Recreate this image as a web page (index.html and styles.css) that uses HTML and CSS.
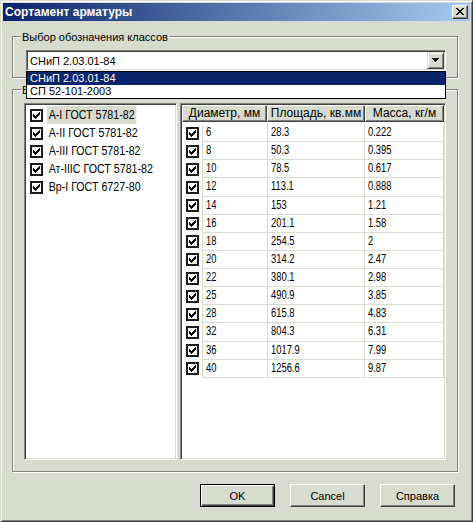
FILE: index.html
```html
<!DOCTYPE html>
<html lang="ru">
<head>
<meta charset="utf-8">
<title>Сортамент арматуры</title>
<link rel="stylesheet" href="styles.css">
</head>
<body>
<div class="window">
  <div class="titlebar">
    <span class="title">Сортамент арматуры</span>
    <span class="close"><svg width="8" height="7" viewBox="0 0 8 7" shape-rendering="crispEdges"><path d="M0 0h2v1h-2zM6 0h2v1h-2zM1 1h2v1h-2zM5 1h2v1h-2zM2 2h4v1h-4zM3 3h2v1h-2zM2 4h4v1h-4zM1 5h2v1h-2zM5 5h2v1h-2zM0 6h2v1h-2zM6 6h2v1h-2z"/></svg></span>
  </div>
  <div class="client">
    <div class="group g1">
      <span class="glabel">Выбор обозначения классов</span>
      <div class="combo sunken">
        <span class="combo-text">СНиП 2.03.01-84</span>
        <span class="combo-btn"><svg width="7" height="4" viewBox="0 0 7 4" shape-rendering="crispEdges"><path d="M0 0h7v1h-1v1h-1v1h-1v1h-1v-1h-1v-1h-1v-1h-1z"/></svg></span>
      </div>
      <ul class="droplist">
        <li class="sel">СНиП 2.03.01-84</li>
        <li>СП 52-101-2003</li>
      </ul>
    </div>
    <div class="group g2">
      <span class="glabel">Выбор классов</span>
      <div class="panes">
        <ul class="classlist sunken">
          <li><span class="cb"><svg width="9" height="9" viewBox="0 0 9 9" shape-rendering="crispEdges"><path d="M7 1h1v1h-1zM6 2h2v1h-2zM1 3h1v1h-1zM5 3h3v1h-3zM1 4h2v1h-2zM4 4h3v1h-3zM1 5h5v1h-5zM2 6h3v1h-3zM3 7h1v1h-1z"/></svg></span><span class="itxt sel">А-I ГОСТ 5781-82</span></li>
          <li><span class="cb"><svg width="9" height="9" viewBox="0 0 9 9" shape-rendering="crispEdges"><path d="M7 1h1v1h-1zM6 2h2v1h-2zM1 3h1v1h-1zM5 3h3v1h-3zM1 4h2v1h-2zM4 4h3v1h-3zM1 5h5v1h-5zM2 6h3v1h-3zM3 7h1v1h-1z"/></svg></span><span class="itxt">А-II ГОСТ 5781-82</span></li>
          <li><span class="cb"><svg width="9" height="9" viewBox="0 0 9 9" shape-rendering="crispEdges"><path d="M7 1h1v1h-1zM6 2h2v1h-2zM1 3h1v1h-1zM5 3h3v1h-3zM1 4h2v1h-2zM4 4h3v1h-3zM1 5h5v1h-5zM2 6h3v1h-3zM3 7h1v1h-1z"/></svg></span><span class="itxt">А-III ГОСТ 5781-82</span></li>
          <li><span class="cb"><svg width="9" height="9" viewBox="0 0 9 9" shape-rendering="crispEdges"><path d="M7 1h1v1h-1zM6 2h2v1h-2zM1 3h1v1h-1zM5 3h3v1h-3zM1 4h2v1h-2zM4 4h3v1h-3zM1 5h5v1h-5zM2 6h3v1h-3zM3 7h1v1h-1z"/></svg></span><span class="itxt">Ат-IIIС ГОСТ 5781-82</span></li>
          <li><span class="cb"><svg width="9" height="9" viewBox="0 0 9 9" shape-rendering="crispEdges"><path d="M7 1h1v1h-1zM6 2h2v1h-2zM1 3h1v1h-1zM5 3h3v1h-3zM1 4h2v1h-2zM4 4h3v1h-3zM1 5h5v1h-5zM2 6h3v1h-3zM3 7h1v1h-1z"/></svg></span><span class="itxt">Вр-I ГОСТ 6727-80</span></li>
        </ul>
        <div class="grid sunken">
          <div class="ghead">
            <span class="h h1">Диаметр, мм</span>
            <span class="h h2">Площадь, кв.мм</span>
            <span class="h h3">Масса, кг/м</span>
          </div>
          <div class="gbody">
            <div class="row"><span class="c0"><span class="cb"><svg width="9" height="9" viewBox="0 0 9 9" shape-rendering="crispEdges"><path d="M7 1h1v1h-1zM6 2h2v1h-2zM1 3h1v1h-1zM5 3h3v1h-3zM1 4h2v1h-2zM4 4h3v1h-3zM1 5h5v1h-5zM2 6h3v1h-3zM3 7h1v1h-1z"/></svg></span></span><span class="c c1"><span class="t">6</span></span><span class="c c2"><span class="t">28.3</span></span><span class="c c3"><span class="t">0.222</span></span></div>
            <div class="row"><span class="c0"><span class="cb"><svg width="9" height="9" viewBox="0 0 9 9" shape-rendering="crispEdges"><path d="M7 1h1v1h-1zM6 2h2v1h-2zM1 3h1v1h-1zM5 3h3v1h-3zM1 4h2v1h-2zM4 4h3v1h-3zM1 5h5v1h-5zM2 6h3v1h-3zM3 7h1v1h-1z"/></svg></span></span><span class="c c1"><span class="t">8</span></span><span class="c c2"><span class="t">50.3</span></span><span class="c c3"><span class="t">0.395</span></span></div>
            <div class="row"><span class="c0"><span class="cb"><svg width="9" height="9" viewBox="0 0 9 9" shape-rendering="crispEdges"><path d="M7 1h1v1h-1zM6 2h2v1h-2zM1 3h1v1h-1zM5 3h3v1h-3zM1 4h2v1h-2zM4 4h3v1h-3zM1 5h5v1h-5zM2 6h3v1h-3zM3 7h1v1h-1z"/></svg></span></span><span class="c c1"><span class="t">10</span></span><span class="c c2"><span class="t">78.5</span></span><span class="c c3"><span class="t">0.617</span></span></div>
            <div class="row"><span class="c0"><span class="cb"><svg width="9" height="9" viewBox="0 0 9 9" shape-rendering="crispEdges"><path d="M7 1h1v1h-1zM6 2h2v1h-2zM1 3h1v1h-1zM5 3h3v1h-3zM1 4h2v1h-2zM4 4h3v1h-3zM1 5h5v1h-5zM2 6h3v1h-3zM3 7h1v1h-1z"/></svg></span></span><span class="c c1"><span class="t">12</span></span><span class="c c2"><span class="t">113.1</span></span><span class="c c3"><span class="t">0.888</span></span></div>
            <div class="row"><span class="c0"><span class="cb"><svg width="9" height="9" viewBox="0 0 9 9" shape-rendering="crispEdges"><path d="M7 1h1v1h-1zM6 2h2v1h-2zM1 3h1v1h-1zM5 3h3v1h-3zM1 4h2v1h-2zM4 4h3v1h-3zM1 5h5v1h-5zM2 6h3v1h-3zM3 7h1v1h-1z"/></svg></span></span><span class="c c1"><span class="t">14</span></span><span class="c c2"><span class="t">153</span></span><span class="c c3"><span class="t">1.21</span></span></div>
            <div class="row"><span class="c0"><span class="cb"><svg width="9" height="9" viewBox="0 0 9 9" shape-rendering="crispEdges"><path d="M7 1h1v1h-1zM6 2h2v1h-2zM1 3h1v1h-1zM5 3h3v1h-3zM1 4h2v1h-2zM4 4h3v1h-3zM1 5h5v1h-5zM2 6h3v1h-3zM3 7h1v1h-1z"/></svg></span></span><span class="c c1"><span class="t">16</span></span><span class="c c2"><span class="t">201.1</span></span><span class="c c3"><span class="t">1.58</span></span></div>
            <div class="row"><span class="c0"><span class="cb"><svg width="9" height="9" viewBox="0 0 9 9" shape-rendering="crispEdges"><path d="M7 1h1v1h-1zM6 2h2v1h-2zM1 3h1v1h-1zM5 3h3v1h-3zM1 4h2v1h-2zM4 4h3v1h-3zM1 5h5v1h-5zM2 6h3v1h-3zM3 7h1v1h-1z"/></svg></span></span><span class="c c1"><span class="t">18</span></span><span class="c c2"><span class="t">254.5</span></span><span class="c c3"><span class="t">2</span></span></div>
            <div class="row"><span class="c0"><span class="cb"><svg width="9" height="9" viewBox="0 0 9 9" shape-rendering="crispEdges"><path d="M7 1h1v1h-1zM6 2h2v1h-2zM1 3h1v1h-1zM5 3h3v1h-3zM1 4h2v1h-2zM4 4h3v1h-3zM1 5h5v1h-5zM2 6h3v1h-3zM3 7h1v1h-1z"/></svg></span></span><span class="c c1"><span class="t">20</span></span><span class="c c2"><span class="t">314.2</span></span><span class="c c3"><span class="t">2.47</span></span></div>
            <div class="row"><span class="c0"><span class="cb"><svg width="9" height="9" viewBox="0 0 9 9" shape-rendering="crispEdges"><path d="M7 1h1v1h-1zM6 2h2v1h-2zM1 3h1v1h-1zM5 3h3v1h-3zM1 4h2v1h-2zM4 4h3v1h-3zM1 5h5v1h-5zM2 6h3v1h-3zM3 7h1v1h-1z"/></svg></span></span><span class="c c1"><span class="t">22</span></span><span class="c c2"><span class="t">380.1</span></span><span class="c c3"><span class="t">2.98</span></span></div>
            <div class="row"><span class="c0"><span class="cb"><svg width="9" height="9" viewBox="0 0 9 9" shape-rendering="crispEdges"><path d="M7 1h1v1h-1zM6 2h2v1h-2zM1 3h1v1h-1zM5 3h3v1h-3zM1 4h2v1h-2zM4 4h3v1h-3zM1 5h5v1h-5zM2 6h3v1h-3zM3 7h1v1h-1z"/></svg></span></span><span class="c c1"><span class="t">25</span></span><span class="c c2"><span class="t">490.9</span></span><span class="c c3"><span class="t">3.85</span></span></div>
            <div class="row"><span class="c0"><span class="cb"><svg width="9" height="9" viewBox="0 0 9 9" shape-rendering="crispEdges"><path d="M7 1h1v1h-1zM6 2h2v1h-2zM1 3h1v1h-1zM5 3h3v1h-3zM1 4h2v1h-2zM4 4h3v1h-3zM1 5h5v1h-5zM2 6h3v1h-3zM3 7h1v1h-1z"/></svg></span></span><span class="c c1"><span class="t">28</span></span><span class="c c2"><span class="t">615.8</span></span><span class="c c3"><span class="t">4.83</span></span></div>
            <div class="row"><span class="c0"><span class="cb"><svg width="9" height="9" viewBox="0 0 9 9" shape-rendering="crispEdges"><path d="M7 1h1v1h-1zM6 2h2v1h-2zM1 3h1v1h-1zM5 3h3v1h-3zM1 4h2v1h-2zM4 4h3v1h-3zM1 5h5v1h-5zM2 6h3v1h-3zM3 7h1v1h-1z"/></svg></span></span><span class="c c1"><span class="t">32</span></span><span class="c c2"><span class="t">804.3</span></span><span class="c c3"><span class="t">6.31</span></span></div>
            <div class="row"><span class="c0"><span class="cb"><svg width="9" height="9" viewBox="0 0 9 9" shape-rendering="crispEdges"><path d="M7 1h1v1h-1zM6 2h2v1h-2zM1 3h1v1h-1zM5 3h3v1h-3zM1 4h2v1h-2zM4 4h3v1h-3zM1 5h5v1h-5zM2 6h3v1h-3zM3 7h1v1h-1z"/></svg></span></span><span class="c c1"><span class="t">36</span></span><span class="c c2"><span class="t">1017.9</span></span><span class="c c3"><span class="t">7.99</span></span></div>
            <div class="row"><span class="c0"><span class="cb"><svg width="9" height="9" viewBox="0 0 9 9" shape-rendering="crispEdges"><path d="M7 1h1v1h-1zM6 2h2v1h-2zM1 3h1v1h-1zM5 3h3v1h-3zM1 4h2v1h-2zM4 4h3v1h-3zM1 5h5v1h-5zM2 6h3v1h-3zM3 7h1v1h-1z"/></svg></span></span><span class="c c1"><span class="t">40</span></span><span class="c c2"><span class="t">1256.6</span></span><span class="c c3"><span class="t">9.87</span></span></div>
          </div>
        </div>
      </div>
    </div>
    <div class="buttons">
      <button class="btn default">OK</button>
      <button class="btn">Cancel</button>
      <button class="btn">Справка</button>
    </div>
  </div>
</div>
</body>
</html>
```

FILE: styles.css
```css
* { box-sizing: border-box; }
html, body { margin: 0; padding: 0; }
body {
  width: 473px;
  height: 522px;
  overflow: hidden;
  background: #d7dbd0;
  color: #000;
  font-family: "Liberation Sans", Arial, sans-serif;
}
.window {
  width: 473px;
  height: 522px;
  border: 1px solid;
  border-color: #d7dbd0 #404040 #404040 #d7dbd0;
  box-shadow: inset 1px 1px #fff, inset -1px -1px #808080;
  padding: 2px;
  display: flex;
  flex-direction: column;
}
.titlebar {
  flex: none;
  height: 18px;
  display: flex;
  align-items: center;
  justify-content: space-between;
  padding: 0 2px;
  background: linear-gradient(90deg, #0a246a, #a6caf0);
}
.title {
  color: #fff;
  font-weight: bold;
  font-size: 12px;
  line-height: 18px;
  white-space: nowrap;
}
.close {
  width: 16px;
  height: 14px;
  display: flex;
  padding: 2px 0 0 3px;
  background: #d7dbd0;
  border: 1px solid;
  border-color: #fff #404040 #404040 #fff;
  box-shadow: inset -1px -1px #808080;
}
.close svg, .combo-btn svg, .cb svg { display: block; }
.client {
  flex: 1;
  display: flex;
  flex-direction: column;
}
.group {
  position: relative;
  flex: none;
  margin-left: 9px;
  width: 446px;
  border: 1px solid #808080;
  box-shadow: inset 1px 1px #fff, 1px 1px #fff;
}
.g1 {
  z-index: 2;
  margin-top: 15px;
  height: 42px;
  padding: 13px 0 0 13px;
}
.g2 {
  z-index: 1;
  margin-top: 11px;
  height: 383px;
  padding: 13px 0 0 11px;
}
.glabel {
  position: absolute;
  left: 8px;
  top: -7px;
  padding: 0 1px;
  background: #d7dbd0;
  font-size: 11px;
  line-height: 14px;
  white-space: nowrap;
}
.sunken {
  background: #fff;
  border: 1px solid;
  border-color: #808080 #fff #fff #808080;
  box-shadow: inset 1px 1px #404040, inset -1px -1px #d7dbd0;
}
.combo {
  width: 420px;
  height: 21px;
  display: flex;
  align-items: center;
  padding: 1px;
}
.combo-text {
  flex: 1;
  padding-left: 2px;
  font-size: 11px;
  white-space: nowrap;
}
.combo-btn {
  width: 17px;
  height: 17px;
  display: flex;
  align-items: center;
  justify-content: center;
  padding-bottom: 1px;
  background: #d7dbd0;
  border: 1px solid;
  border-color: #d7dbd0 #404040 #404040 #d7dbd0;
  box-shadow: inset 1px 1px #fff, inset -1px -1px #808080;
}
.droplist {
  position: absolute;
  left: 13px;
  top: 34px;
  width: 420px;
  margin: 0;
  padding: 0;
  list-style: none;
  background: #fff;
  border: 1px solid #000;
  z-index: 3;
}
.droplist li {
  height: 13px;
  line-height: 13px;
  font-size: 11px;
  padding-left: 3px;
  white-space: nowrap;
}
.droplist li.sel {
  background: #0a246a;
  color: #fff;
}
.panes {
  display: flex;
  gap: 3px;
  height: 357px;
}
.classlist {
  width: 153px;
  margin: 0;
  padding: 2px 0 0 5px;
  list-style: none;
}
.classlist li {
  height: 18px;
  display: flex;
  align-items: center;
}
.cb {
  flex: none;
  width: 13px;
  height: 13px;
  display: flex;
  background: #fff;
  border: 2px solid #1a1a1a;
}
.itxt {
  flex: none;
  display: inline-block;
  margin-left: 4px;
  padding: 0 2px;
  font-size: 13px;
  line-height: 18px;
  white-space: pre;
  transform: scaleX(0.82);
  transform-origin: 0 50%;
}
.itxt.sel { background: #d7dbd0; }
.grid {
  width: 266px;
  display: flex;
  flex-direction: column;
  padding: 1px;
}
.ghead {
  flex: none;
  display: flex;
  height: 17px;
}
.h {
  height: 17px;
  font-size: 12px;
  line-height: 15px;
  text-align: center;
  white-space: nowrap;
  overflow: hidden;
  background: #d7dbd0;
  border: 1px solid;
  border-color: #fff #404040 #404040 #fff;
  box-shadow: inset -1px -1px #808080;
}
.h1 { width: 85px; }
.h2 { width: 98px; }
.h3 { width: 79px; }
.gbody { padding-top: 2px; }
.row {
  display: flex;
  height: 18.125px;
}
.c0 {
  width: 20px;
  display: flex;
  align-items: center;
  padding-left: 4px;
}
.c {
  border-left: 1px solid #d7dbd0;
  border-bottom: 1px solid #d7dbd0;
  padding-left: 3px;
  font-size: 12.5px;
  line-height: 17px;
  white-space: nowrap;
}
.t {
  display: inline-block;
  transform: scaleX(0.75);
  transform-origin: 0 50%;
}
.c1 { width: 65px; }
.c2 { width: 97px; }
.c3 { width: 80px; border-right: 1px solid #d7dbd0; }
.buttons {
  display: flex;
  justify-content: flex-end;
  gap: 15px;
  margin-top: 12px;
  padding-right: 15px;
}
.btn {
  width: 75px;
  height: 23px;
  margin: 0;
  padding: 0;
  font-family: "Liberation Sans", Arial, sans-serif;
  font-size: 11px;
  color: #000;
  background: #d7dbd0;
  border: 1px solid;
  border-color: #fff #404040 #404040 #fff;
  box-shadow: inset -1px -1px #808080;
}
.btn.default {
  border-color: #000;
  box-shadow: inset 1px 1px #fff, inset -1px -1px #404040, inset -2px -2px #808080;
}
```
